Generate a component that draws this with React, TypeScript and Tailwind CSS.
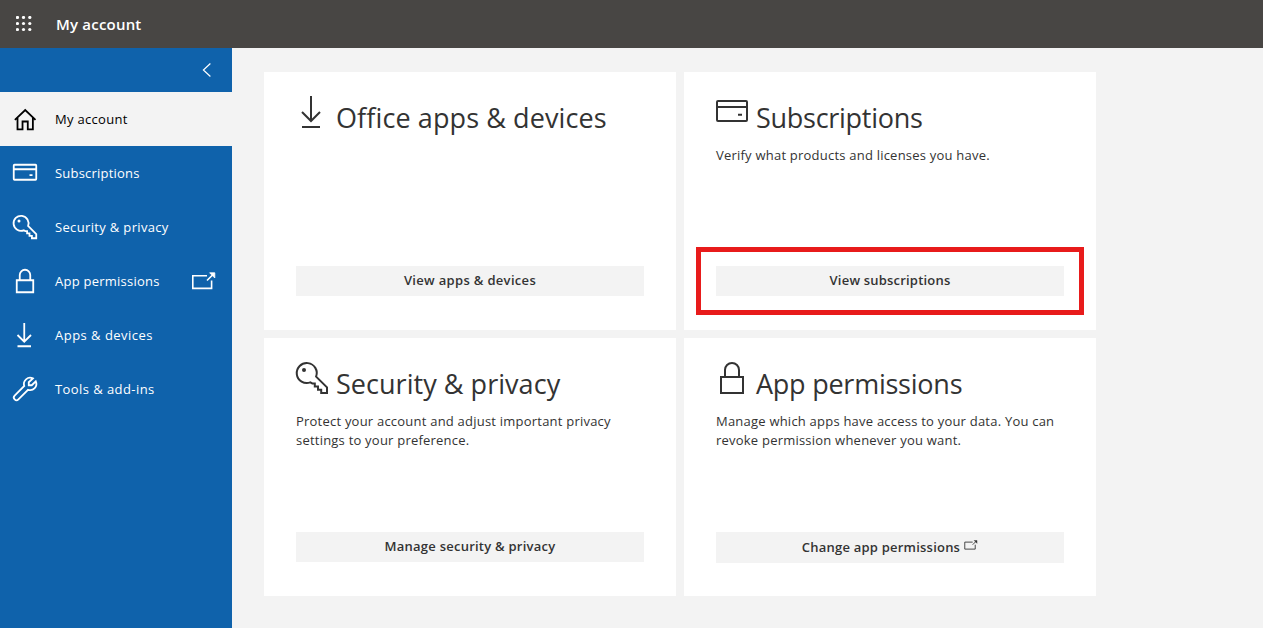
import type { ReactNode } from "react";

type IconProps = { className?: string };

function Svg({ className = "", children }: { className?: string; children: ReactNode }) {
  return (
    <svg viewBox="0 0 32 32" fill="none" stroke="currentColor" className={`block shrink-0 overflow-visible ${className}`}>
      {children}
    </svg>
  );
}

const HomeIcon = ({ className }: IconProps) => (
  <Svg className={className}>
    <path d="M2.5 17.3 16.3 4 30 17.3M6 14.3V29.7h6.7V19.3h7v10.4h6.8V14.3" />
  </Svg>
);

const CardIcon = ({ className }: IconProps) => (
  <Svg className={className}>
    <rect x="1" y="5" width="30" height="20" rx="1" />
    <path d="M1 11h30M22 18.8h4" />
  </Svg>
);

const KeyIcon = ({ className }: IconProps) => (
  <Svg className={className}>
    <path d="M20.1 14.6 31 25.4V31h-5.8v-3.2h-3.2v-3.2h-3.2v-3.2h-2.5l-2-1A10 10 0 1 1 20.1 14.6Z" />
    <circle cx="8" cy="8" r="2" fill="currentColor" stroke="none" />
  </Svg>
);

const LockIcon = ({ className }: IconProps) => (
  <Svg className={className}>
    <path d="M5 15h22v16H5ZM9 15V8a7 7 0 0 1 14 0v7" />
  </Svg>
);

const DownloadIcon = ({ className }: IconProps) => (
  <Svg className={className}>
    <path d="M15 0v25M6 16l9 9 9-9M6 31h18" />
  </Svg>
);

const WrenchIcon = ({ className }: IconProps) => (
  <Svg className={className}>
    <path d="M26.5 1.9A8.3 8.3 0 0 0 15 12L2.2 24.9a3.5 3.5 0 0 0 5 5L20 17a8.3 8.3 0 0 0 10.4-11.2L25 11h-4V7Z" />
  </Svg>
);

const ExternalIcon = ({ className = "" }: IconProps) => (
  <svg viewBox="0 0 24 18" fill="none" stroke="currentColor" strokeWidth="1.6" className={`block shrink-0 ${className}`}>
    <path d="M15 3.8H.8v12.6h18.8V8.5M15 8.5 21.5 2" />
    <path d="M17.6.8h5.2V6Z" fill="currentColor" strokeWidth="0.8" />
  </svg>
);

const nav = [
  { label: "My account", Icon: HomeIcon, active: true, track: "tracking-[0.3px]" },
  { label: "Subscriptions", Icon: CardIcon, track: "tracking-[0.2px]" },
  { label: "Security & privacy", Icon: KeyIcon, track: "tracking-[0.34px]" },
  { label: "App permissions", Icon: LockIcon, external: true, track: "tracking-[0.24px]" },
  { label: "Apps & devices", Icon: DownloadIcon, track: "tracking-[0.48px]" },
  { label: "Tools & add-ins", Icon: WrenchIcon, track: "tracking-[0.43px]" },
];

const cards = [
  {
    title: "Office apps & devices",
    titleTrack: "tracking-[0.1px]",
    Icon: DownloadIcon,
    lines: [],
    action: "View apps & devices",
    actionTrack: "tracking-[0.32px]",
  },
  {
    title: "Subscriptions",
    titleTrack: "tracking-[-0.28px]",
    Icon: CardIcon,
    lines: ["Verify what products and licenses you have."],
    action: "View subscriptions",
    actionTrack: "tracking-[0.2px]",
    highlighted: true,
  },
  {
    title: "Security & privacy",
    titleTrack: "tracking-[0.04px]",
    Icon: KeyIcon,
    lines: ["Protect your account and adjust important privacy", "settings to your preference."],
    action: "Manage security & privacy",
    actionTrack: "tracking-[0.24px]",
  },
  {
    title: "App permissions",
    titleTrack: "tracking-[-0.24px]",
    Icon: LockIcon,
    lines: ["Manage which apps have access to your data. You can", "revoke permission whenever you want."],
    action: "Change app permissions",
    actionTrack: "tracking-[0.22px]",
    external: true,
  },
];

export default function App() {
  return (
    <div className="flex h-screen flex-col overflow-hidden bg-[#f3f3f3] font-['Open_Sans',sans-serif] text-[#333]">
      <header className="flex h-12 shrink-0 items-center bg-[#484644] text-white">
        <svg viewBox="0 0 16 16" fill="currentColor" className="ml-4 size-4">
          {[1.5, 7.5, 13.5].map((y) => [1.5, 7.5, 13.8].map((x) => <circle key={`${x}-${y}`} cx={x} cy={y} r="1.6" />))}
        </svg>
        <span className="ml-6 text-[15px] font-semibold tracking-[0.2px]">My account</span>
      </header>
      <div className="flex min-h-0 grow">
        <nav className="w-[232px] shrink-0 bg-[#0f62ab] text-white">
          <div className="flex h-11 items-center justify-end pr-5">
            <svg viewBox="0 0 10 14" fill="none" stroke="currentColor" strokeWidth="1.2" className="h-3.5 w-2.5">
              <path d="M8.4.5 1.4 7l7 6.5" />
            </svg>
          </div>
          {nav.map(({ label, Icon, active, external, track }) => (
            <a key={label} className={`flex h-[54px] items-center pl-[13px] pr-4 ${active ? "bg-[#f3f3f3] text-black" : ""}`}>
              <Icon className="size-6 stroke-[2.4]" />
              <span className={`ml-[18px] pt-0.5 whitespace-nowrap text-[13px] ${track}`}>{label}</span>
              {external && <ExternalIcon className="ml-auto h-[18px] w-6" />}
            </a>
          ))}
        </nav>
        <main className="mt-6 ml-8 grid h-[524px] w-[832px] grid-cols-2 grid-rows-2 gap-2">
          {cards.map(({ title, titleTrack, Icon, lines, action, actionTrack, highlighted, external }) => (
            <section key={title} className={`flex flex-col bg-white px-8 pt-6 ${external ? "pb-[33px]" : "pb-[34px]"}`}>
              <h2 className="flex h-[50px] shrink-0 items-start">
                <Icon className="size-8 stroke-2" />
                <span className={`mt-[3px] ml-2 whitespace-nowrap text-[27px] leading-[38px] ${titleTrack}`}>{title}</span>
              </h2>
              <div className="text-[13px] leading-[19px] tracking-[0.22px]">
                {lines.map((line) => (
                  <p key={line} className="whitespace-nowrap">{line}</p>
                ))}
              </div>
              <button
                className={`relative mt-auto flex items-center justify-center bg-[#f3f3f3] text-[13px] font-semibold ${actionTrack} ${
                  external ? "h-[31px] pt-px" : "h-[30px]"
                }`}
              >
                {action}
                {external && <ExternalIcon className="mb-1.5 ml-1 h-2.5 w-3.5" />}
                {highlighted && <span className="absolute -inset-x-5 -top-[19px] -bottom-[19px] border-5 border-[#e81b1b]" />}
              </button>
            </section>
          ))}
        </main>
      </div>
    </div>
  );
}
